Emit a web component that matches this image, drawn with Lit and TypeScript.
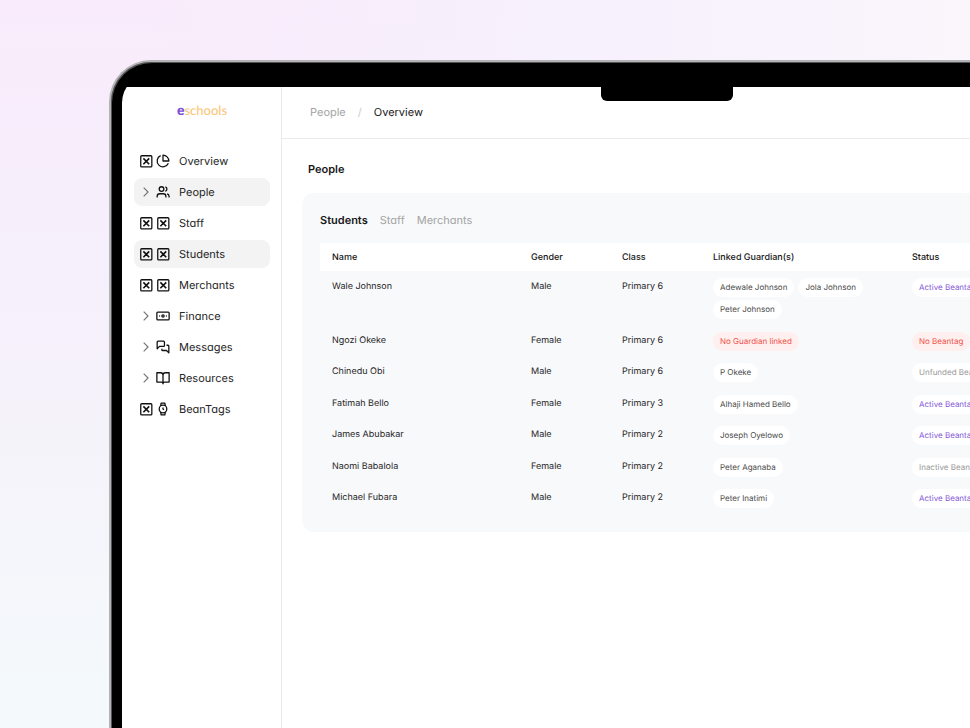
import { LitElement, html, css, svg } from "lit";
import { customElement } from "lit/decorators.js";
import { classMap } from "lit/directives/class-map.js";

const icons = {
  box: svg`<rect x="3" y="3" width="19" height="19" rx="1.500"/><path stroke-width="2.800" d="M7.500 7.500l10 10M17.500 7.500l-10 10"/>`,
  chevron: svg`<path d="M8 4.500l7.500 7.500L8 19.500"/>`,
  pie: svg`<path d="M21.200 15.900A10 10 0 1 1 8 2.800"/><path d="M22 12A10 10 0 0 0 12 2v10z"/>`,
  users: svg`<path d="M17 21.500v-2a4.500 4.500 0 0 0-4.500-4.500h-6A4.500 4.500 0 0 0 2 19.500v2"/><circle cx="9.500" cy="7" r="4"/><path d="M22.500 21.500v-2a4.500 4.500 0 0 0-3.500-4.300M16 3.200a4 4 0 0 1 0 7.600"/>`,
  money: svg`<rect x="1.500" y="5.500" width="21" height="13" rx="1.500"/><circle cx="12" cy="12" r="2"/><path d="M5.500 12h1.500M17 12h1.500"/>`,
  chats: svg`<path d="M14.500 9.500a1.500 1.500 0 0 1-1.500 1.500H6l-4 4V3.500A1.500 1.500 0 0 1 3.500 2H13a1.500 1.500 0 0 1 1.500 1.500z"/><path d="M18 9h2.500a1.500 1.500 0 0 1 1.500 1.500V22l-4-4h-6.500a1.500 1.500 0 0 1-1.500-1.500V15"/>`,
  book: svg`<path d="M12 7a4 4 0 0 0-4-4H1.500v16H9a3 3 0 0 1 3 3 3 3 0 0 1 3-3h7.500V3H16a4 4 0 0 0-4 4zM12 7v14"/>`,
  watch: svg`<circle cx="12" cy="12" r="6.500"/><path d="M12 9.500V12l1.500 1.500M8 6.500l.8-4.500h6.400l.8 4.500M8 17.500l.8 4.500h6.400l.8-4.500"/>`,
};
type IconName = keyof typeof icons;

const icon = (name: IconName, cls = "") =>
  html`<svg class="icon ${cls}" viewBox="0 0 24 24" aria-hidden="true">${icons[name]}</svg>`;

const nav: { label: string; lead: IconName; icon: IconName; on?: boolean }[] = [
  { label: "Overview", lead: "box", icon: "pie" },
  { label: "People", lead: "chevron", icon: "users", on: true },
  { label: "Staff", lead: "box", icon: "box" },
  { label: "Students", lead: "box", icon: "box", on: true },
  { label: "Merchants", lead: "box", icon: "box" },
  { label: "Finance", lead: "chevron", icon: "money" },
  { label: "Messages", lead: "chevron", icon: "chats" },
  { label: "Resources", lead: "chevron", icon: "book" },
  { label: "BeanTags", lead: "box", icon: "watch" },
];

type Status = "Active Beantag" | "No Beantag" | "Unfunded Beantag" | "Inactive Beantag";
const students: { name: string; gender: string; level: string; guardians: string[]; status: Status }[] = [
  { name: "Wale Johnson", gender: "Male", level: "Primary 6", guardians: ["Adewale Johnson", "Jola Johnson", "Peter Johnson"], status: "Active Beantag" },
  { name: "Ngozi Okeke", gender: "Female", level: "Primary 6", guardians: [], status: "No Beantag" },
  { name: "Chinedu Obi", gender: "Male", level: "Primary 6", guardians: ["P Okeke"], status: "Unfunded Beantag" },
  { name: "Fatimah Bello", gender: "Female", level: "Primary 3", guardians: ["Alhaji Hamed Bello"], status: "Active Beantag" },
  { name: "James Abubakar", gender: "Male", level: "Primary 2", guardians: ["Joseph Oyelowo"], status: "Active Beantag" },
  { name: "Naomi Babalola", gender: "Female", level: "Primary 2", guardians: ["Peter Aganaba"], status: "Inactive Beantag" },
  { name: "Michael Fubara", gender: "Male", level: "Primary 2", guardians: ["Peter Inatimi"], status: "Active Beantag" },
];

@customElement("school-sidebar")
class SchoolSidebar extends LitElement {
  static styles = css`
    :host { display: flex; flex-direction: column; padding: 0 11px 0 12px; border-right: 1px solid #ebebeb; background: #fff; }
    .logo { display: block; align-self: center; margin: 14px 0 28px; font: 500 13px/18px Lato, sans-serif; color: #fbc77c; text-decoration: none; }
    .logo b { color: #7a4fd6; font-weight: 900; font-size: 14px; line-height: 16px; }
    nav { display: flex; flex-direction: column; gap: 3px; }
    .item {
      display: flex; align-items: center; height: 27px; padding: 0 0 1px 5px; border-radius: 8px;
      color: #262626; font-size: 11px; text-decoration: none; font-feature-settings: "cv11";
    }
    .item.on { background: #f3f3f3; }
    .icon { width: 14px; height: 14px; margin-right: 3px; fill: none; stroke: #111; stroke-width: 2.2; stroke-linejoin: round; }
    .lead.chevron { stroke: #777; stroke-width: 2; }
    .label { margin-left: 6px; }
  `;
  render() {
    return html`
      <a class="logo" href="#" aria-label="eschools"><b>e</b>schools</a>
      <nav aria-label="Main">
        ${nav.map((n) => html`
          <a href="#" class=${classMap({ item: true, on: !!n.on })}>
            ${icon(n.lead, `lead ${n.lead}`)}${icon(n.icon)}<span class="label">${n.label}</span>
          </a>`)}
      </nav>`;
  }
}

@customElement("student-table")
class StudentTable extends LitElement {
  static styles = css`
    :host { display: block; }
    table { width: 100%; table-layout: fixed; border-collapse: separate; border-spacing: 0; font-size: 9px; line-height: 18px; color: #262626; text-align: left; }
    .wide { width: 199px; }
    .narrow { width: 91px; }
    th { background: #fff; height: 26px; padding: 2px 0 0 12px; font-weight: 500; color: #171717; }
    td { vertical-align: top; padding: 7px 0 5px 12px; }
    tbody tr:nth-child(odd) td { padding-bottom: 6px; }
    .chips { display: flex; flex-wrap: wrap; gap: 3px 4px; }
    .chip { padding: 0 7px; border-radius: 10px; background: #fff; color: #4a4a4a; font-size: 8px; line-height: 19px; white-space: nowrap; }
    .chip.active { color: #8459d9; }
    .chip.idle { color: #999; }
    .chip.none { background: #ffefee; color: #f04f49; }
  `;
  private kind(s: Status) {
    return s === "Active Beantag" ? "active" : s === "No Beantag" ? "none" : "idle";
  }
  render() {
    return html`
      <table>
        <colgroup><col class="wide"><col class="narrow"><col class="narrow"><col class="wide"><col></colgroup>
        <thead><tr><th>Name</th><th>Gender</th><th>Class</th><th>Linked Guardian(s)</th><th>Status</th></tr></thead>
        <tbody>
          ${students.map((s) => html`
            <tr>
              <td>${s.name}</td><td>${s.gender}</td><td>${s.level}</td>
              <td><div class="chips">
                ${s.guardians.length
                  ? s.guardians.map((g) => html`<span class="chip">${g}</span>`)
                  : html`<span class="chip none">No Guardian linked</span>`}
              </div></td>
              <td><div class="chips"><span class="chip ${this.kind(s.status)}">${s.status}</span></div></td>
            </tr>`)}
        </tbody>
      </table>`;
  }
}

@customElement("app-root")
class AppRoot extends LitElement {
  static styles = css`
    :host {
      display: flex; box-sizing: border-box; height: 100vh; overflow: hidden; padding: 60px 0 0 109px;
      font-family: Inter, "Liberation Sans", sans-serif; text-rendering: geometricPrecision;
      background:
        linear-gradient(90deg, transparent 15%, #f7f0fd 58%, #faf6fc 100%),
        linear-gradient(180deg, #f9ebfb 0%, #f6effc 35%, #f5f3fa 60%, #f4fafc 100%);
    }
    .device {
      flex: 1 0 auto; width: 100%; box-sizing: border-box; margin-bottom: -80px; padding: 11px 0 0 11px;
      border: 2px solid #b3b3b5; border-right: 0; border-radius: 42px 0 0 0; background: #000; box-shadow: inset 1px 1px 0 #555;
    }
    .screen {
      position: relative; display: grid; grid-template: 14px 1fr / 160px 1fr; height: 100%;
      border-radius: 30px 0 0 0; overflow: hidden;
    }
    .strip { grid-column: 1 / -1; background: #000; }
    .notch { position: absolute; top: 0; left: 479px; width: 132px; height: 28px; border-radius: 0 0 6px 6px; background: #000; }
    main { background: #fff; min-width: 0; }
    .crumbs { display: flex; align-items: center; height: 50px; padding: 0 0 1px 28px; border-bottom: 1px solid #ebebeb; font-size: 11px; color: #a3a3a3; }
    .crumbs a { color: inherit; text-decoration: none; }
    .slash { margin: 0 12px; color: #ccc; }
    .here { color: #171717; }
    h1 { margin: 22px 0 16px 26px; font-size: 11px; line-height: 16px; font-weight: 600; color: #171717; }
    .panel { margin-left: 20px; padding: 18px 0 18px 18px; border-radius: 12px 0 0 12px; background: #f8f9fb; }
    .tabs { display: flex; gap: 12px; margin-bottom: 14px; }
    .tab { padding: 0; border: 0; background: none; font: 400 11px/18px Inter, "Liberation Sans", sans-serif; text-rendering: inherit; color: #a3a3a3; font-feature-settings: "cv11"; }
    .tab.on { color: #171717; font-weight: 600; }
  `;
  render() {
    return html`
      <div class="device">
        <div class="screen">
          <div class="strip"></div>
          <div class="notch"></div>
          <school-sidebar></school-sidebar>
          <main>
            <div class="crumbs"><a href="#">People</a><span class="slash">/</span><span class="here">Overview</span></div>
            <h1>People</h1>
            <section class="panel">
              <div class="tabs" role="tablist">
                <button class="tab on" role="tab" aria-selected="true">Students</button>
                <button class="tab" role="tab" aria-selected="false">Staff</button>
                <button class="tab" role="tab" aria-selected="false">Merchants</button>
              </div>
              <student-table></student-table>
            </section>
          </main>
        </div>
      </div>`;
  }
}
